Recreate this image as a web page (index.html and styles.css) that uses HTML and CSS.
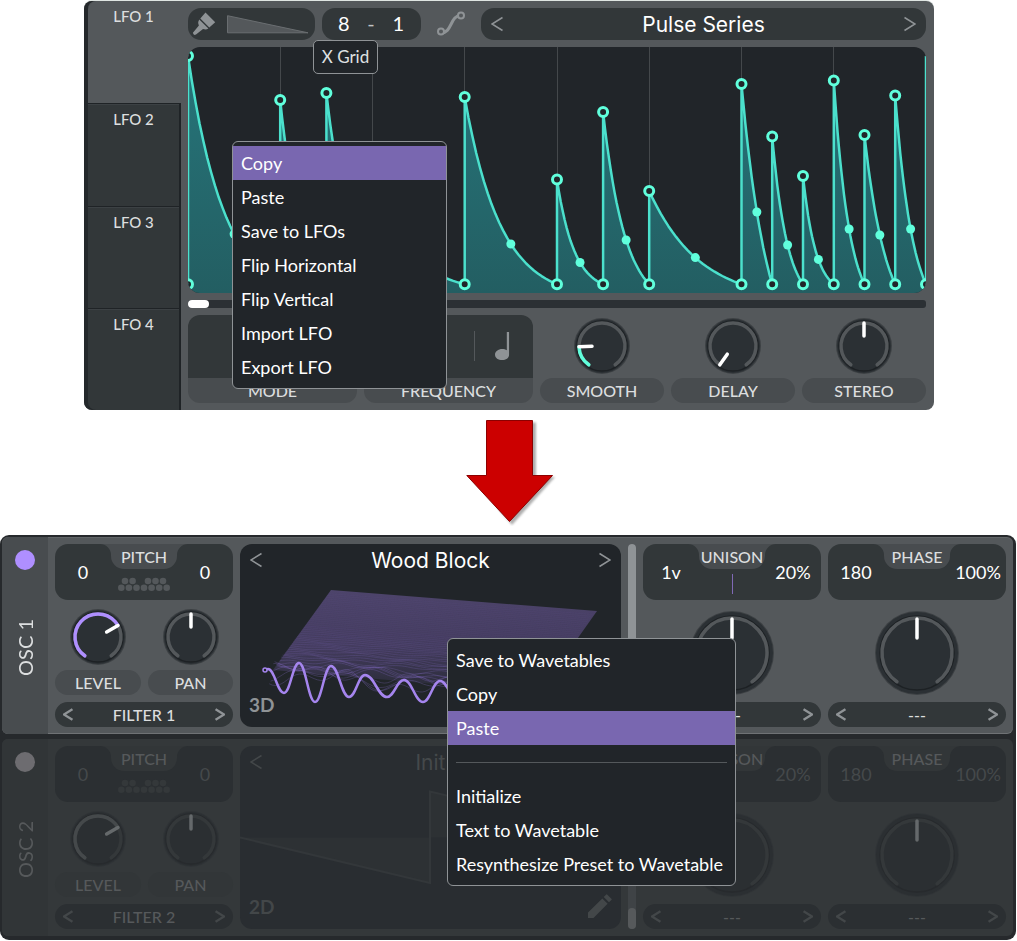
FILE: index.html
```html
<!DOCTYPE html>
<html lang="en">
<head>
<meta charset="utf-8">
<meta name="viewport" content="width=device-width, initial-scale=1">
<title>LFO to wavetable</title>
<link rel="stylesheet" href="styles.css">
</head>
<body>
<svg class="defs" aria-hidden="true">
  <symbol id="knob-small" viewBox="0 0 56 56">
    <circle class="k-rim" cx="28" cy="28" r="28"/>
    <circle class="k-body" cx="28" cy="28" r="27"/>
    <circle class="k-groove" cx="28" cy="28" r="25"/>
    <path class="k-arc" d="M14.8 46.8A23 23 0 1 1 41.2 46.8"/>
  </symbol>
  <symbol id="knob-big" viewBox="0 0 84 84">
    <circle class="k-rim" cx="42" cy="42" r="42"/>
    <circle class="k-body" cx="42" cy="42" r="41"/>
    <circle class="k-groove" cx="42" cy="42" r="37"/>
    <path class="k-arc" d="M21.9 70.7A35 35 0 1 1 62.1 70.7"/>
  </symbol>
  <symbol id="prev" viewBox="0 0 12 16"><path d="M11.500 1.500 1 8l10.500 6.500"/></symbol>
  <symbol id="next" viewBox="0 0 12 16"><path d="M.5 1.500 11 8 .5 14.500"/></symbol>
  <symbol id="notch" viewBox="0 0 88 25"><path d="M0 0a11 11 0 0 1 11 11v1a13 13 0 0 0 13 13h40a13 13 0 0 0 13-13v-1a11 11 0 0 1 11-11z"/></symbol>
  <symbol id="keys" viewBox="0 0 54 15">
    <g><circle cx="8" cy="4" r="3.300"/><circle cx="15.600" cy="4" r="3.300"/><circle cx="31" cy="4" r="3.300"/><circle cx="38.500" cy="4" r="3.300"/><circle cx="46" cy="4" r="3.300"/>
    <circle cx="4.300" cy="10.700" r="3.300"/><circle cx="11.900" cy="10.700" r="3.300"/><circle cx="19.500" cy="10.700" r="3.300"/><circle cx="27" cy="10.700" r="3.300"/><circle cx="34.600" cy="10.700" r="3.300"/><circle cx="42.200" cy="10.700" r="3.300"/><circle cx="49.700" cy="10.700" r="3.300"/></g>
  </symbol>
</svg>

<main class="page">
  <section class="lfo" aria-label="LFO">
    <nav class="lfo-tabs">
      <button class="lfo-tab is-active">LFO 1</button>
      <button class="lfo-tab">LFO 2</button>
      <button class="lfo-tab">LFO 3</button>
      <button class="lfo-tab">LFO 4</button>
    </nav>
    <div class="lfo-main">
      <div class="lfo-bar">
        <button class="brush-box" aria-label="Paint">
          <svg class="brush" viewBox="0 0 24 24"><path d="M13.500 .6 23.200 10.300 17.300 15.600 8.300 6.500zM7.300 7.500 16.400 16.600C14 18 12.500 17.300 11 17L4 22.600Q1.300 23.800 .9 20.800L6.900 13.400C5.800 11 6 9.500 7.300 7.500z"/></svg>
          <svg class="ramp" viewBox="0 0 82 19"><path d="M.5 .7 81 17.800H.5z"/></svg>
        </button>
        <div class="grid-box"><span>8</span><span class="dash">-</span><span>1</span></div>
        <button class="curve-button" aria-label="Smooth">
          <svg viewBox="0 0 28 26"><path d="M4 21.500C15 23 13 4 24 4.500"/><circle cx="4" cy="20.500" r="3"/><circle cx="24" cy="4.500" r="3"/></svg>
        </button>
        <div class="preset-box">
          <button class="step" aria-label="Previous"><svg><use href="#prev"/></svg></button>
          <span class="title">Pulse Series</span>
          <button class="step" aria-label="Next"><svg><use href="#next"/></svg></button>
        </div>
      </div>
      <svg id="lfo-graph" class="graph" viewBox="0 0 738 246" preserveAspectRatio="none" role="img" aria-label="Pulse Series curve"></svg>
      <div class="scroll-track"><div class="scroll-thumb"></div></div>
      <div class="lfo-controls">
        <div class="cell boxed"><div class="cell-view"></div><span class="pill">MODE</span></div>
        <div class="cell boxed">
          <div class="cell-view note-view">
            <svg class="note" viewBox="0 0 16 30"><path d="M12.600 0H15v24.500C15 27.800 11.600 30 7.700 30 3.400 30 0 27.500 0 24.200s3.400-6.100 7.700-6.100c1.900 0 3.600.5 4.900 1.300z"/></svg>
          </div>
          <span class="pill">FREQUENCY</span>
        </div>
        <div class="cell">
          <div class="cell-view">
            <div class="knob">
              <svg viewBox="0 0 56 56"><use href="#knob-small"/><path class="k-value teal" pathLength="290" stroke-dasharray="53 290" d="M14.800 46.800A23 23 0 1 1 41.200 46.800"/><path class="k-hand" transform="rotate(-92 28 28)" d="M28 5v13"/></svg>
              <input id="smooth" type="range" value="18">
            </div>
          </div>
          <label class="pill" for="smooth">SMOOTH</label>
        </div>
        <div class="cell">
          <div class="cell-view">
            <div class="knob">
              <svg viewBox="0 0 56 56"><use href="#knob-small"/><path class="k-hand" transform="rotate(-145 28 28)" d="M28 5v13"/></svg>
              <input id="delay" type="range" value="0">
            </div>
          </div>
          <label class="pill" for="delay">DELAY</label>
        </div>
        <div class="cell">
          <div class="cell-view">
            <div class="knob">
              <svg viewBox="0 0 56 56"><use href="#knob-small"/><path class="k-hand" d="M28 5v13"/></svg>
              <input id="stereo" type="range" value="50">
            </div>
          </div>
          <label class="pill" for="stereo">STEREO</label>
        </div>
      </div>
    </div>
    <div class="tooltip" role="tooltip">X Grid</div>
    <div class="menu lfo-menu" role="menu">
      <button class="is-active" role="menuitem">Copy</button>
      <button role="menuitem">Paste</button>
      <button role="menuitem">Save to LFOs</button>
      <button role="menuitem">Flip Horizontal</button>
      <button role="menuitem">Flip Vertical</button>
      <button role="menuitem">Import LFO</button>
      <button role="menuitem">Export LFO</button>
    </div>
  </section>

  <svg class="arrow" viewBox="0 0 92 106" aria-hidden="true">
    <path class="arrow-shadow" d="M22 2.500H70V57H89L46 105 6 58H22z"/>
    <path class="arrow-body" d="M20.500 .5H66.500V55.500H86.500L43.500 101.500 .8 55.500H20.500z"/>
  </svg>

  <section class="synth" aria-label="Oscillators">
    <article class="osc">
      <div class="osc-side">
        <input class="power" id="osc1" type="checkbox" checked>
        <label for="osc1">OSC 1</label>
      </div>
      <div class="osc-grid">
        <div class="column">
          <div class="pair">
            <svg class="notch"><use href="#notch"/></svg>
            <span class="pair-name">PITCH</span>
            <span class="pair-left">0</span><span class="pair-right">0</span>
            <svg class="keys"><use href="#keys"/></svg>
          </div>
          <div class="knob-row">
            <div class="knob">
              <svg viewBox="0 0 56 56"><use href="#knob-small"/><path class="k-value" pathLength="290" stroke-dasharray="205 290" d="M14.800 46.800A23 23 0 1 1 41.200 46.800"/><path class="k-hand" transform="rotate(60 28 28)" d="M28 5v13"/></svg>
              <input id="level1" type="range" value="70">
            </div>
            <div class="knob">
              <svg viewBox="0 0 56 56"><use href="#knob-small"/><path class="k-hand" d="M28 5v13"/></svg>
              <input id="pan1" type="range" value="50">
            </div>
            <label class="pill" for="level1">LEVEL</label>
            <label class="pill" for="pan1">PAN</label>
          </div>
          <div class="picker">
            <button aria-label="Previous"><svg><use href="#prev"/></svg></button><span>FILTER 1</span><button aria-label="Next"><svg><use href="#next"/></svg></button>
          </div>
        </div>
        <div class="wave">
          <svg id="wave-3d" class="wave-art" viewBox="0 0 381 183" preserveAspectRatio="none" role="img" aria-label="Wood Block wavetable"></svg>
          <div class="wave-head">
            <button class="step" aria-label="Previous"><svg><use href="#prev"/></svg></button>
            <span class="title">Wood Block</span>
            <button class="step" aria-label="Next"><svg><use href="#next"/></svg></button>
          </div>
          <div class="wave-foot"><button class="view-mode">3D</button></div>
        </div>
        <div class="slot"><div class="slot-thumb full"></div></div>
        <div class="column">
          <div class="pair">
            <svg class="notch"><use href="#notch"/></svg>
            <span class="pair-name">UNISON</span>
            <span class="pair-left">1v</span><span class="pair-right">20%</span>
            <span class="voice-line"></span>
          </div>
          <div class="knob big">
            <svg viewBox="0 0 84 84"><use href="#knob-big"/><path class="k-hand" d="M42 8v19"/></svg>
            <input aria-label="Unison morph" type="range" value="50">
          </div>
          <div class="picker">
            <button aria-label="Previous"><svg><use href="#prev"/></svg></button><span>---</span><button aria-label="Next"><svg><use href="#next"/></svg></button>
          </div>
        </div>
        <div class="column">
          <div class="pair">
            <svg class="notch"><use href="#notch"/></svg>
            <span class="pair-name">PHASE</span>
            <span class="pair-left">180</span><span class="pair-right">100%</span>
          </div>
          <div class="knob big">
            <svg viewBox="0 0 84 84"><use href="#knob-big"/><path class="k-hand" d="M42 8v19"/></svg>
            <input aria-label="Phase morph" type="range" value="50">
          </div>
          <div class="picker">
            <button aria-label="Previous"><svg><use href="#prev"/></svg></button><span>---</span><button aria-label="Next"><svg><use href="#next"/></svg></button>
          </div>
        </div>
      </div>
    </article>

    <article class="osc is-off">
      <div class="osc-side">
        <input class="power" id="osc2" type="checkbox">
        <label for="osc2">OSC 2</label>
      </div>
      <div class="osc-grid">
        <div class="column">
          <div class="pair">
            <svg class="notch"><use href="#notch"/></svg>
            <span class="pair-name">PITCH</span>
            <span class="pair-left">0</span><span class="pair-right">0</span>
            <svg class="keys"><use href="#keys"/></svg>
          </div>
          <div class="knob-row">
            <div class="knob">
              <svg viewBox="0 0 56 56"><use href="#knob-small"/><path class="k-value" pathLength="290" stroke-dasharray="205 290" d="M14.800 46.800A23 23 0 1 1 41.200 46.800"/><path class="k-hand" transform="rotate(60 28 28)" d="M28 5v13"/></svg>
              <input id="level2" type="range" value="70">
            </div>
            <div class="knob">
              <svg viewBox="0 0 56 56"><use href="#knob-small"/><path class="k-hand" d="M28 5v13"/></svg>
              <input id="pan2" type="range" value="50">
            </div>
            <label class="pill" for="level2">LEVEL</label>
            <label class="pill" for="pan2">PAN</label>
          </div>
          <div class="picker">
            <button aria-label="Previous"><svg><use href="#prev"/></svg></button><span>FILTER 2</span><button aria-label="Next"><svg><use href="#next"/></svg></button>
          </div>
        </div>
        <div class="wave">
          <svg class="wave-art" viewBox="0 0 381 183" preserveAspectRatio="none" role="img" aria-label="Init wavetable">
            <path class="saw-fill" d="M0 91.500 190 137V45.500L381 91.500z"/>
            <path class="saw-line" d="M0 91.500 190 137V45.500L381 91.500"/>
          </svg>
          <div class="wave-head">
            <button class="step" aria-label="Previous"><svg><use href="#prev"/></svg></button>
            <span class="title">Init</span>
            <button class="step" aria-label="Next"><svg><use href="#next"/></svg></button>
          </div>
          <div class="wave-foot">
            <button class="view-mode">2D</button>
            <button class="edit" aria-label="Edit"><svg viewBox="0 0 24 24"><path d="M14.300 4.400 19.600 9.700 5.500 24H0V18.600zM15.700 3 18.300 .4Q18.700 0 19.100 .4L23.600 4.900Q24 5.300 23.600 5.700L21 8.300z"/></svg></button>
          </div>
        </div>
        <div class="slot"><div class="slot-thumb"></div></div>
        <div class="column">
          <div class="pair">
            <svg class="notch"><use href="#notch"/></svg>
            <span class="pair-name">UNISON</span>
            <span class="pair-left">1v</span><span class="pair-right">20%</span>
          </div>
          <div class="knob big">
            <svg viewBox="0 0 84 84"><use href="#knob-big"/><path class="k-hand" d="M42 8v19"/></svg>
            <input aria-label="Unison morph" type="range" value="50">
          </div>
          <div class="picker">
            <button aria-label="Previous"><svg><use href="#prev"/></svg></button><span>---</span><button aria-label="Next"><svg><use href="#next"/></svg></button>
          </div>
        </div>
        <div class="column">
          <div class="pair">
            <svg class="notch"><use href="#notch"/></svg>
            <span class="pair-name">PHASE</span>
            <span class="pair-left">180</span><span class="pair-right">100%</span>
          </div>
          <div class="knob big">
            <svg viewBox="0 0 84 84"><use href="#knob-big"/><path class="k-hand" d="M42 8v19"/></svg>
            <input aria-label="Phase morph" type="range" value="50">
          </div>
          <div class="picker">
            <button aria-label="Previous"><svg><use href="#prev"/></svg></button><span>---</span><button aria-label="Next"><svg><use href="#next"/></svg></button>
          </div>
        </div>
      </div>
    </article>

    <div class="menu osc-menu" role="menu">
      <button role="menuitem">Save to Wavetables</button>
      <button role="menuitem">Copy</button>
      <button class="is-active" role="menuitem">Paste</button>
      <hr>
      <button role="menuitem">Initialize</button>
      <button role="menuitem">Text to Wavetable</button>
      <button role="menuitem">Resynthesize Preset to Wavetable</button>
    </div>
  </section>
</main>
<script src="script.js"></script>
</body>
</html>
```

FILE: styles.css
```css
:root {
  --ink: #212529;
  --panel: #54585b;
  --side: #484c4f;
  --box: #323739;
  --pill: #484c4f;
  --label: #dcdedf;
  --value: #ffffff;
  --mute: #8f9396;
  --knob: #2b3034;
  --knob-rim: #3d4144;
  --groove: #1d2124;
  --arc: #54585b;
  --hand: #ffffff;
  --accent: #af8fff;
  --wave: #212529;
  --dots: #54585b;
}

* { box-sizing: border-box; }

body {
  margin: 0;
  background: #ffffff;
  color: var(--value);
  font-family: Lato, "Noto Sans", sans-serif;
  font-size: 16px;
}

button {
  margin: 0;
  padding: 0;
  border: 0;
  background: none;
  color: inherit;
  font: inherit;
}

svg { display: block; }

.defs {
  position: absolute;
  width: 0;
  height: 0;
}

.page {
  display: flex;
  flex-direction: column;
  padding: 1px 1px 1px 0;
}

/* LFO panel */

.lfo {
  position: relative;
  display: flex;
  margin: 0 82px 0 84px;
  border-radius: 8px;
  background: var(--panel);
  box-shadow: 0 -1px 0 #dfe5e2;
}

.lfo-tabs {
  display: grid;
  grid-auto-rows: 1fr;
  width: 97px;
  padding-left: 4px;
  border-radius: 8px 0 0 8px;
  background: #24282b;
}

.lfo-tab {
  display: flex;
  justify-content: center;
  padding-top: 5px;
  border: solid #1f2326;
  border-width: 1px 2px 0 0;
  background: var(--box);
  color: var(--label);
  font-size: 15px;
  font-weight: 500;
  line-height: 20px;
  box-shadow: inset 0 1px 0 #3c4144;
}

.lfo-tab.is-active {
  padding-top: 4px;
  border-color: var(--panel);
  border-radius: 8px 0 0 0;
  background: var(--panel);
  box-shadow: none;
}

.lfo-tab:last-child { border-radius: 0 0 0 8px; }

.lfo-main {
  flex: 1;
  min-width: 0;
  padding: 7px 8px 7px 7px;
}

.lfo-bar {
  display: flex;
  gap: 7px;
  height: 32px;
  margin-bottom: 7px;
}

.brush-box,
.grid-box,
.preset-box {
  display: flex;
  align-items: center;
  border-radius: 13px;
  background: var(--box);
}

.brush-box {
  gap: 11px;
  width: 127px;
  padding-left: 4px;
}

.brush {
  width: 24px;
  height: 24px;
  fill: var(--mute);
}

.ramp {
  width: 82px;
  height: 19px;
  fill: var(--panel);
  stroke: #6a6e71;
}

.grid-box {
  justify-content: space-between;
  width: 99px;
  padding: 0 17px 2px 16px;
  font-size: 20px;
}

.grid-box .dash { color: #c0c2c4; }

.curve-button {
  display: flex;
  align-items: center;
  justify-content: center;
  width: 46px;
}

.curve-button svg {
  width: 28px;
  height: 26px;
}

.curve-button path {
  fill: none;
  stroke: var(--mute);
  stroke-width: 3;
}

.curve-button circle {
  fill: var(--panel);
  stroke: var(--mute);
  stroke-width: 2;
}

.preset-box {
  flex: 1;
  padding: 0 10px;
}

.title {
  flex: 1;
  text-align: center;
  font-family: Inter, Lato, sans-serif;
  font-size: 21px;
}

.step svg {
  width: 12px;
  height: 16px;
  fill: none;
  stroke: var(--mute);
  stroke-width: 1.5;
}

.graph {
  width: 100%;
  height: 246px;
  border-radius: 12px;
  background: var(--ink);
}

.g-grid { stroke: #44484b; }
.g-fill { fill: url(#teal-fade); }
.g-line { fill: none; stroke: #4be0cc; stroke-width: 2.5; stroke-linejoin: round; }
.g-point { fill: var(--ink); stroke: #60ffdc; stroke-width: 3; }
.g-mid { fill: #60ffdc; }

.scroll-track {
  height: 8px;
  margin: 7px 0;
  border-radius: 3px;
  background: var(--knob);
}

.scroll-thumb {
  width: 21px;
  height: 8px;
  border-radius: 4px;
  background: #ffffff;
}

.lfo-controls {
  display: grid;
  grid-template-columns: 169fr 169fr 124fr 124fr 124fr;
  gap: 7px;
}

.cell { display: flex; flex-direction: column; }

.cell-view {
  display: flex;
  align-items: center;
  justify-content: center;
  height: 63px;
  padding-bottom: 2px;
}

.boxed .cell-view {
  border-radius: 12px 12px 0 0;
  background: var(--box);
}

.boxed .pill { border-radius: 0 0 12px 12px; }

.note-view {
  justify-content: flex-end;
  padding-right: 23px;
}

.note {
  width: 36px;
  height: 30px;
  padding-left: 20px;
  border-left: 1px solid var(--panel);
  fill: var(--mute);
}

.pill {
  display: block;
  height: 25px;
  border-radius: 13px;
  background: var(--pill);
  color: var(--label);
  text-align: center;
  font-size: 16px;
  font-weight: 500;
  line-height: 26px;
}

/* Knobs */

.knob {
  position: relative;
  width: 56px;
  height: 56px;
}

.knob svg { width: 100%; height: 100%; }

.knob input {
  position: absolute;
  inset: 0;
  width: 100%;
  height: 100%;
  margin: 0;
  opacity: 0;
}

.k-rim { fill: var(--knob-rim); }
.k-body { fill: var(--knob); }
.k-groove { fill: none; stroke: var(--groove); stroke-width: 1.5; }
.k-arc { fill: none; stroke: var(--arc); stroke-width: 3.5; stroke-linecap: round; }
.k-value { fill: none; stroke: var(--accent); stroke-width: 3.5; stroke-linecap: round; }
.k-value.teal { stroke: #60ffdc; }
.k-hand { fill: none; stroke: var(--hand); stroke-width: 3.5; stroke-linecap: round; }

/* Overlays */

.tooltip {
  position: absolute;
  left: 229px;
  top: 39px;
  width: 65px;
  border: 1px solid var(--mute);
  border-radius: 5px;
  background: var(--ink);
  color: #dfe1e2;
  text-align: center;
  font-size: 17px;
  line-height: 32px;
}

.menu {
  position: absolute;
  display: flex;
  flex-direction: column;
  padding: 4px 0;
  border: 1px solid var(--mute);
  border-radius: 6px;
  background: var(--ink);
}

.menu button {
  height: 34px;
  padding: 0 8px;
  color: #ffffff;
  text-align: left;
  font-size: 18px;
  line-height: 34px;
  white-space: nowrap;
}

.menu .is-active { background: #7967b0; }

.menu hr {
  width: calc(100% - 16px);
  height: 1px;
  margin: 17px 8px 16px;
  border: 0;
  background: #54585b;
}

.lfo-menu {
  left: 148px;
  top: 140px;
  width: 215px;
}

.osc-menu {
  left: 447px;
  top: 103px;
  width: 289px;
}

.arrow {
  width: 92px;
  height: 106px;
  margin: 10px 0 9px 466px;
}

.arrow-shadow { fill: #7a7a7a; opacity: .6; filter: blur(1px); }
.arrow-body { fill: #cc0000; stroke: #8c0000; }

/* Oscillators */

.synth {
  position: relative;
  display: flex;
  flex-direction: column;
  gap: 5px;
  padding: 2px 3px 4px 2px;
  border-radius: 9px;
  background: #26292c;
}

.osc {
  display: flex;
  border-radius: 6px;
  background: var(--panel);
  box-shadow: inset 0 1px 0 rgba(255, 255, 255, .08), inset 0 -1px 0 rgba(255, 255, 255, .16);
}

.osc.is-off {
  --panel: #34383a;
  --side: #313537;
  --box: #2b2f32;
  --pill: #323638;
  --label: #56595b;
  --value: #45494b;
  --mute: #434749;
  --knob: #2b2f32;
  --knob-rim: #303437;
  --groove: #272a2d;
  --arc: #34383a;
  --hand: #65696b;
  --accent: #45494b;
  --wave: #292d31;
  --dots: #34383a;
  color: var(--value);
  box-shadow: none;
}

.osc-side {
  display: flex;
  flex-direction: column;
  align-items: center;
  gap: 49px;
  width: 46px;
  padding-top: 13px;
  border-radius: 6px 0 0 6px;
  background: var(--side);
}

.power {
  appearance: none;
  width: 20px;
  height: 20px;
  margin: 0;
  border-radius: 50%;
  background: #6d6c70;
}

.power:checked { background: var(--accent); }

.osc-side label {
  color: var(--label);
  font-size: 20px;
  line-height: 24px;
  writing-mode: vertical-rl;
  transform: rotate(180deg);
}

.osc-grid {
  display: grid;
  flex: 1;
  grid-template-columns: 178fr 381fr 8px 178fr 178fr;
  gap: 7px;
  padding: 7px;
}

.column {
  display: flex;
  flex-direction: column;
  justify-content: space-between;
  height: 183px;
}

.pair {
  position: relative;
  display: flex;
  justify-content: space-between;
  height: 56px;
  border-radius: 13px;
  background: var(--box);
  font-size: 18px;
  line-height: 56px;
}

.pair-left,
.pair-right {
  position: relative;
  width: 56px;
  text-align: center;
}

.pair-right { order: 2; }

.notch {
  position: absolute;
  left: calc(50% - 44px);
  top: 0;
  width: 88px;
  height: 25px;
  fill: var(--pill);
}

.pair-name {
  position: absolute;
  left: 0;
  right: 0;
  top: 0;
  color: var(--label);
  text-align: center;
  font-size: 16px;
  font-weight: 500;
  line-height: 26px;
}

.keys {
  align-self: flex-end;
  order: 1;
  width: 54px;
  height: 15px;
  margin-bottom: 8px;
  fill: var(--dots);
}

.voice-line {
  order: 1;
  width: 1px;
  height: 20px;
  margin-top: 30px;
  background: #8069b5;
}

.knob-row {
  display: grid;
  grid-template-columns: 86fr 85fr;
  gap: 5px 7px;
  justify-items: center;
  margin-top: 2px;
}

.knob-row .pill { width: 100%; }

.knob.big {
  align-self: center;
  width: 84px;
  height: 84px;
  margin-top: 4px;
}

.picker {
  display: flex;
  align-items: center;
  justify-content: space-between;
  height: 25px;
  padding: 0 8px;
  border-radius: 13px;
  background: var(--box);
  color: var(--label);
  font-size: 16px;
  font-weight: 500;
}

.picker svg {
  width: 10px;
  height: 13px;
  fill: none;
  stroke: var(--mute);
  stroke-width: 3;
}

.wave {
  position: relative;
  display: flex;
  flex-direction: column;
  justify-content: space-between;
  overflow: hidden;
  border-radius: 12px;
  background: var(--wave);
}

.wave-art {
  position: absolute;
  inset: 0;
  width: 100%;
  height: 100%;
}

.wave-head,
.wave-foot {
  position: relative;
  display: flex;
  align-items: center;
  justify-content: space-between;
  height: 32px;
  padding: 0 10px;
}

.wave-foot {
  height: 46px;
  padding: 0 9px;
}

.view-mode {
  color: var(--mute);
  font-size: 19px;
  font-weight: 700;
}

.edit svg { width: 24px; height: 24px; fill: var(--mute); }

.sheet { fill: url(#sheet-fade); }
.ridge { fill: none; stroke: #9a7de6; }
.front { fill: none; stroke: #a585ee; stroke-width: 2.5; stroke-linejoin: round; }
.front-dot { fill: var(--ink); stroke: #a585ee; stroke-width: 1.5; }
.saw-fill { fill: #2d3134; }
.saw-line { fill: none; stroke: #33373a; stroke-width: 2; }

.slot {
  display: flex;
  flex-direction: column;
  justify-content: flex-end;
  border-radius: 4px;
  background: #3f4346;
}

.slot-thumb {
  height: 21px;
  border-radius: 4px;
  background: #56595b;
}

.slot-thumb.full {
  height: 100%;
  background: #8f9396;
}
```

FILE: script.js
```js
const round = (n) => Math.round(n * 10) / 10;

/* LFO curve: each segment falls from its peak to the floor. */
const FLOOR = 237.3;
const segments = [
  { x: 0, end: 92.2, top: 9, mid: 187 },
  { x: 92.2, end: 138.4, top: 53, mid: 190 },
  { x: 138.4, end: 184.5, top: 46, mid: 180 },
  { x: 184.5, end: 276.7, top: 133, mid: 214 },
  { x: 276.7, end: 369, top: 50, mid: 197 },
  { x: 369, end: 415.1, top: 132.5, mid: 215.5 },
  { x: 415.1, end: 461.2, top: 65, mid: 193 },
  { x: 461.2, end: 553.5, top: 144, mid: 210.6 },
  { x: 553.5, end: 584.2, top: 37, mid: 165 },
  { x: 584.2, end: 615, top: 89.5, mid: 198 },
  { x: 615, end: 645.8, top: 129, mid: 212.4 },
  { x: 645.8, end: 676.5, top: 33.5, mid: 182 },
  { x: 676.5, end: 707.2, top: 88, mid: 188 },
  { x: 707.2, end: 738, top: 48.5, mid: 182 }
];

function drawGraph() {
  let line = `M0 ${FLOOR}`;
  let points = '';
  for (const s of segments) {
    const height = FLOOR - s.top;
    const power = 2 * Math.log(height / (FLOOR - s.mid) - 1);
    for (let i = 0; i <= 24; i++) {
      const t = i / 24;
      const g = (Math.exp(power * (1 - t)) - 1) / (Math.exp(power) - 1);
      line += `L${round(s.x + (s.end - s.x) * t)} ${round(FLOOR - height * g)}`;
    }
    points += `<circle class="g-mid" cx="${(s.x + s.end) / 2}" cy="${s.mid}" r="4.500"/>`;
    points += `<circle class="g-point" cx="${s.x}" cy="${s.top}" r="4.500"/>`;
    points += `<circle class="g-point" cx="${s.end}" cy="${FLOOR}" r="4.500"/>`;
  }
  points += `<circle class="g-point" cx="0" cy="${FLOOR}" r="4.500"/>`;
  line += 'L738 9';
  let grid = '';
  for (let i = 1; i < 8; i++) {
    grid += `<path class="g-grid" d="M${Math.floor(i * 92.25) + 0.5} 0V246"/>`;
  }
  document.getElementById('lfo-graph').innerHTML =
    `<defs><linearGradient id="teal-fade" x1="0" y1="0" x2="0" y2="1"><stop offset="0" stop-color="#26757a"/><stop offset="1" stop-color="#235e62"/></linearGradient></defs>` +
    grid + `<path class="g-fill" d="${line}V246H0z"/><path class="g-line" d="${line}"/>` + points;
}

/* Wavetable: a flat sheet with ridges that grow toward the front frame. */
const frontKeys = [[24, 126], [28, 125], [44, 149], [59, 119], [75, 158], [91, 122], [109, 153], [125, 131], [147, 153], [164, 136], [183, 158], [200, 137], [219, 158], [238, 141], [256, 160], [274, 145], [291, 150]];

function ridgeLine(i, depth) {
  const left = 28 + 63 * depth;
  const base = 132 - 86 * depth;
  const amp = 11 * Math.exp(-depth * 7);
  let d = '';
  for (let s = 0; s <= 266; s += 3) {
    const y = base + s * 0.079 +
      amp * (Math.sin(s / (7 + (i % 4)) + i * 1.1) * 0.6 +
      Math.sin(s / (17 + (i % 5)) + i * 0.9) * 0.6);
    d += `${s ? 'L' : 'M'}${round(left + s)} ${round(y)}`;
  }
  const strength = depth > 0.6 ? 0.05 : 0.32 - depth * 0.42;
  return `<path class="ridge" stroke-width="0.8" opacity="${Math.round(strength * 100) / 100}" d="${d}"/>`;
}

function drawWave() {
  let ridges = '';
  for (let i = 46; i > 0; i--) ridges += ridgeLine(i, i / 48);
  let front = `M${frontKeys[0].join(' ')}`;
  for (let i = 1; i < frontKeys.length; i++) {
    const [x0, y0] = frontKeys[i - 1];
    const [x1, y1] = frontKeys[i];
    const half = (x1 - x0) * 0.42;
    front += `C${round(x0 + half)} ${y0} ${round(x1 - half)} ${y1} ${x1} ${y1}`;
  }
  document.getElementById('wave-3d').innerHTML =
    `<defs><linearGradient id="sheet-fade" x1="0" y1="0" x2="0" y2="1"><stop offset="0" stop-color="#4d446b"/><stop offset=".55" stop-color="#443c5f"/><stop offset="1" stop-color="#272a33"/></linearGradient></defs>` +
    `<path class="sheet" d="M91 46 357 67 299 149 33 126z"/>` + ridges +
    `<path class="front" d="${front}"/><circle class="front-dot" cx="25" cy="126" r="2"/>`;
}

drawGraph();
drawWave();
```
